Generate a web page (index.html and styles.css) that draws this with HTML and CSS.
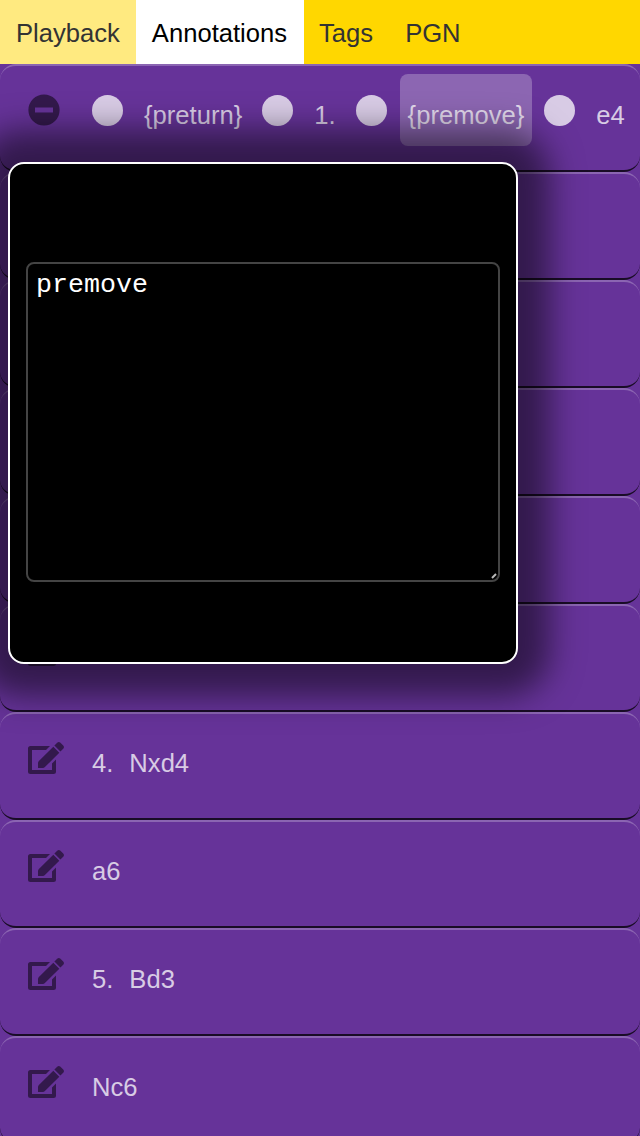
FILE: index.html
```html
<!DOCTYPE html>
<html lang="en">
<head>
<meta charset="utf-8">
<title>Annotations</title>
<link rel="stylesheet" href="styles.css">
</head>
<body>
<svg class="defs" aria-hidden="true">
  <symbol id="edit" viewBox="0 0 36 32">
    <path d="M22 4H2.500Q0 4 0 6.500V29.500Q0 32 2.500 32H25.500Q28 32 28 29.500V17.600L24 21.600V28H4V8H18Z"/>
    <path d="M10 26V21.200Q10 20 10.900 19.100L25.300 4.700L31.300 10.700L16.900 25.100Q16 26 14.800 26Z"/>
    <path d="M26.400 3.600L29.200 .8Q30.800 -.700 32.400 .8L35.200 3.600Q36.700 5.200 35.200 6.800L32.400 9.600Z"/>
  </symbol>
  <symbol id="minus" viewBox="0 0 32 32">
    <path fill-rule="evenodd" d="M16 .4A15.600 15.600 0 1 1 16 31.600A15.600 15.600 0 1 1 16 .4ZM7 13.500V18.500H25V13.500Z"/>
  </symbol>
</svg>
<nav class="tabs">
  <a class="tab hover">Playback</a>
  <a class="tab active">Annotations</a>
  <a class="tab">Tags</a>
  <a class="tab">PGN</a>
</nav>
<ol class="moves">
  <li class="move open">
    <svg class="icon icon-minus"><use href="#minus"/></svg>
    <span class="dot"></span><span class="token">{preturn}</span>
    <span class="dot"></span><span class="token">1.</span>
    <span class="dot"></span><span class="token selected">{premove}</span>
    <span class="dot"></span><span class="token">e4</span>
  </li>
  <li class="move"><svg class="icon"><use href="#edit"/></svg><span>c5</span></li>
  <li class="move"><svg class="icon"><use href="#edit"/></svg><span>2.</span><span>Nf3</span></li>
  <li class="move"><svg class="icon"><use href="#edit"/></svg><span>d6</span></li>
  <li class="move"><svg class="icon"><use href="#edit"/></svg><span>3.</span><span>d4</span></li>
  <li class="move"><svg class="icon"><use href="#edit"/></svg><span>cxd4</span></li>
  <li class="move"><svg class="icon"><use href="#edit"/></svg><span>4.</span><span>Nxd4</span></li>
  <li class="move"><svg class="icon"><use href="#edit"/></svg><span>a6</span></li>
  <li class="move"><svg class="icon"><use href="#edit"/></svg><span>5.</span><span>Bd3</span></li>
  <li class="move"><svg class="icon"><use href="#edit"/></svg><span>Nc6</span></li>
</ol>
<div class="dialog">
  <textarea class="comment" spellcheck="false">premove</textarea>
  <svg class="grip" viewBox="0 0 6 6"><path d="M1 5L5 1"/></svg>
</div>
</body>
</html>
```
FILE: styles.css
```css
* { box-sizing: border-box; }
html, body { height: 100%; overflow: hidden; }
body {
  margin: 0;
  background: #639;
  font: 25.6px/32px "Liberation Sans", Arial, sans-serif;
}
.defs { position: absolute; width: 0; height: 0; }
.tabs { display: flex; height: 64px; background: gold; }
.tab { padding: 17px 16px 15px; color: #333; white-space: pre; }
.tab.hover { background: #ffea80; }
.tab.active { width: 168px; margin-right: -.8px; background: #fff; color: #000; }
.moves { margin: 0; padding: 0; list-style: none; }
.move {
  display: flex;
  align-items: flex-start;
  gap: 16px;
  height: 108px;
  padding: 33px 0 0 28px;
  border-top: 2px solid rgba(255, 255, 255, .25);
  border-bottom: 2px solid rgba(0, 0, 0, .75);
  border-radius: 16px;
  color: rgba(255, 255, 255, .75);
  white-space: nowrap;
}
.icon {
  flex: none;
  width: 36px;
  height: 32px;
  margin: -5px 12px 0 0;
  fill: #33194c;
}
.open { gap: 0; padding-top: 8px; }
.icon-minus { width: 32px; margin: 20.200px 20px 0 0; }
.dot {
  flex: none;
  width: 31.200px;
  height: 31.200px;
  margin: 20.800px 12.900px 0 11.950px;
  border-radius: 50%;
  background: rgba(255, 255, 255, .75);
}
.token { height: 72px; padding: 25px 8px 0; border-radius: 8px; }
.token.selected { background: rgba(255, 255, 255, .25); }
.dialog {
  position: absolute;
  left: 8px;
  top: 162px;
  width: 510px;
  height: 502px;
  padding: 98px 16px;
  border: 2px solid #fff;
  border-radius: 16px;
  background: #000;
  box-shadow: 0 0 32px 32px rgba(0, 0, 0, .5);
}
.comment {
  display: block;
  width: 474px;
  height: 320px;
  padding: 6px 8px;
  border: 2px solid #444;
  border-radius: 8px;
  outline: 0;
  background: #000;
  color: #fff;
  font: 26.667px/30px "Liberation Mono", monospace;
  resize: none;
}
.grip {
  position: absolute;
  right: 19px;
  bottom: 83px;
  width: 6px;
  height: 6px;
  stroke: #bbb;
  stroke-width: 2;
}
```
